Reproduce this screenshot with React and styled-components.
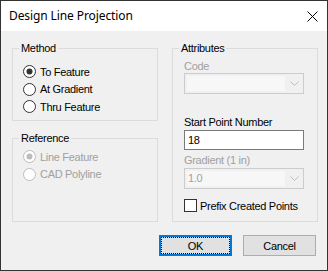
import React from 'react';
import styled, { createGlobalStyle } from 'styled-components';

const GlobalStyle = createGlobalStyle`
    html, body {
        margin: 0;
        padding: 0;
        background: #f0f0f0;
    }
`;

const Window = styled.div`
    width: 328px;
    height: 271px;
    box-sizing: border-box;
    border: 1px solid #333333;
    background: #f0f0f0;
    display: flex;
    flex-direction: column;
    font-family: "Liberation Sans", Arial, sans-serif;
    font-size: 11px;
    letter-spacing: -0.3px;
    color: #000;
`;

const TitleBar = styled.div`
    height: 30px;
    background: #fff;
    display: flex;
    align-items: center;
    justify-content: space-between;
    padding: 0 9px 0 8px;
    flex: none;

    span {
        font-family: "Noto Sans", "Open Sans", sans-serif;
        font-size: 12px;
        letter-spacing: -0.1px;
        line-height: 16px;
        margin-top: -1px;
    }
`;

const Body = styled.div`
    padding: 11px 9px 0 11px;
    display: flex;
    flex-direction: column;
`;

const Columns = styled.div`
    display: flex;
    gap: 14px;
    align-items: stretch;
`;

const Column = styled.div`
    width: 146px;
    display: flex;
    flex-direction: column;
    gap: 11px;
`;

const Group = styled.fieldset`
    margin: 0;
    padding: 0;
    width: 146px;
    min-width: 0;
    box-sizing: border-box;
    border: 1px solid #dcdcdc;
    flex: ${p => (p.$grow ? 1 : 'none')};
`;

const Legend = styled.legend`
    padding: 0 2px;
    margin-left: 6px;
    line-height: 13px;
    color: #000;
`;

const GroupInner = styled.div`
    display: flex;
    flex-direction: column;
    padding: ${p => p.$pad};
`;

const RadioRow = styled.label`
    display: flex;
    align-items: center;
    gap: 4px;
    height: 17.5px;
    color: ${p => (p.$disabled ? '#a0a0a0' : '#000')};
`;

const FieldLabel = styled.div`
    line-height: 13px;
    margin-top: ${p => p.$top || 0}px;
    color: ${p => (p.$disabled ? '#a0a0a0' : '#000')};
`;

const Combo = styled.div`
    width: 120px;
    height: 21px;
    box-sizing: border-box;
    border: 1px solid #cccccc;
    background: #f0f0f0;
    display: flex;
    align-items: stretch;
    padding: 2px 0 2px 2px;
    margin-top: ${p => p.$top || 0}px;
`;

const ComboField = styled.div`
    flex: 1;
    background: #f7f7f7;
    color: #a0a0a0;
    line-height: 15px;
    padding-left: 1px;
`;

const ComboArrow = styled.div`
    width: 18px;
    display: flex;
    align-items: center;
    justify-content: center;
`;

const TextBox = styled.div`
    width: 120px;
    height: 20px;
    box-sizing: border-box;
    border: 1px solid #7a7a7a;
    background: #fff;
    padding-left: 3px;
    line-height: 18px;
    margin-top: 1px;
`;

const CheckRow = styled.label`
    display: flex;
    align-items: center;
    gap: 3px;
    height: 13px;
    margin-top: 10px;
`;

const CheckBox = styled.span`
    width: 13px;
    height: 13px;
    box-sizing: border-box;
    border: 1px solid #333;
    background: #fff;
    flex: none;
`;

const ButtonRow = styled.div`
    display: flex;
    justify-content: flex-end;
    gap: 11px;
    margin-top: 13px;
    padding-right: 2px;
`;

const Button = styled.button`
    width: 73px;
    height: 21px;
    box-sizing: border-box;
    margin: 0;
    padding: 0;
    background: #e1e1e1;
    font: inherit;
    letter-spacing: inherit;
    color: #000;
    border: ${p => (p.$primary ? '2px solid #0078d7' : '1px solid #adadad')};
    outline: ${p => (p.$primary ? '1px dotted #000' : 'none')};
    outline-offset: -3px;
`;

const RadioIcon = ({ checked, disabled }) => {
    const line = disabled ? '#bcbcbc' : '#333333';
    return (
        <svg width="13" height="13" viewBox="0 0 13 13" style={{ flex: 'none' }}>
            <circle cx="6.5" cy="6.5" r="6" fill="#fff" stroke={line} strokeWidth="1" />
            {checked && <circle cx="6.5" cy="6.5" r="3" fill={line} />}
        </svg>
    );
};

const Chevron = () => (
    <svg width="9" height="5" viewBox="0 0 9 5">
        <path d="M0.5 0.5 L4.5 4.5 L8.5 0.5" fill="none" stroke="#bfbfbf" strokeWidth="1" />
    </svg>
);

const CloseIcon = () => (
    <svg width="11" height="11" viewBox="0 0 11 11">
        <path d="M0.5 0.5 L10.5 10.5 M10.5 0.5 L0.5 10.5" stroke="#000" strokeWidth="1" />
    </svg>
);

const Radio = ({ label, checked, disabled }) => (
    <RadioRow $disabled={disabled}>
        <RadioIcon checked={checked} disabled={disabled} />
        {label}
    </RadioRow>
);

export default function App() {
    return (
        <>
            <GlobalStyle />
            <Window>
                <TitleBar>
                    <span>Design Line Projection</span>
                    <CloseIcon />
                </TitleBar>
                <Body>
                    <Columns>
                        <Column>
                            <Group>
                                <Legend>Method</Legend>
                                <GroupInner $pad="8px 0 4.5px 10px">
                                    <Radio label="To Feature" checked />
                                    <Radio label="At Gradient" />
                                    <Radio label="Thru Feature" />
                                </GroupInner>
                            </Group>
                            <Group $grow>
                                <Legend>Reference</Legend>
                                <GroupInner $pad="3px 0 0 10px">
                                    <Radio label="Line Feature" checked disabled />
                                    <Radio label="CAD Polyline" disabled />
                                </GroupInner>
                            </Group>
                        </Column>
                        <Group>
                            <Legend>Attributes</Legend>
                            <GroupInner $pad="5px 0 9px 11px">
                                <FieldLabel $disabled>Code</FieldLabel>
                                <Combo>
                                    <ComboField />
                                    <ComboArrow><Chevron /></ComboArrow>
                                </Combo>
                                <FieldLabel $top={22}>Start Point Number</FieldLabel>
                                <TextBox>18</TextBox>
                                <FieldLabel $top={4} $disabled>Gradient (1 in)</FieldLabel>
                                <Combo $top={1}>
                                    <ComboField>1.0</ComboField>
                                    <ComboArrow><Chevron /></ComboArrow>
                                </Combo>
                                <CheckRow>
                                    <CheckBox />
                                    Prefix Created Points
                                </CheckRow>
                            </GroupInner>
                        </Group>
                    </Columns>
                    <ButtonRow>
                        <Button $primary>OK</Button>
                        <Button>Cancel</Button>
                    </ButtonRow>
                </Body>
            </Window>
        </>
    );
}
